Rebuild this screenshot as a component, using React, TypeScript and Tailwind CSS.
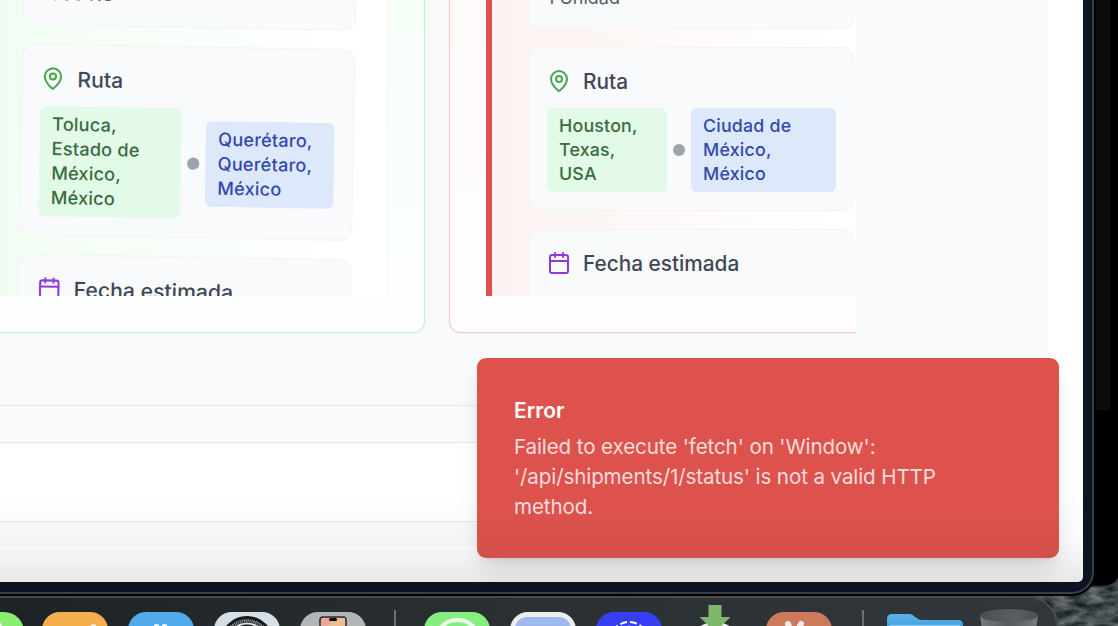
import { Calendar, MapPin } from "lucide-react";

type RouteProps = { from: string[]; to: string[]; fromWidth: string; toWidth: string };

function Field({ children, className = "" }: { children?: React.ReactNode; className?: string }) {
  return (
    <div className={"w-[327px] shrink-0 rounded-[12px] border border-[#f1f3f5] bg-[#f9fafc] " + className}>
      {children}
    </div>
  );
}

function Heading({ icon, label }: { icon: React.ReactNode; label: string }) {
  return (
    <div className="flex h-[30px] items-center gap-3">
      {icon}
      <span className="whitespace-nowrap pt-0.5 text-[20.800px] leading-[30px] font-medium text-[#3f4757]">{label}</span>
    </div>
  );
}

function Lines({ lines }: { lines: string[] }) {
  return (
    <>
      {lines.map((line, i) => (
        <div key={i} className="whitespace-nowrap">{line}</div>
      ))}
    </>
  );
}

function Route({ from, to, fromWidth, toWidth }: RouteProps) {
  return (
    <Field className="p-[18px]">
      <Heading icon={<MapPin size={24} strokeWidth={2} className="text-[#4aa553]" />} label="Ruta" />
      <div className="mt-3 flex items-center gap-1.5 text-[17.800px] leading-6 font-medium tracking-[0.2px]">
        <div className={"rounded-[6px] bg-[#e2fae7] px-3 py-1.5 text-[#3a6b40] " + fromWidth}>
          <Lines lines={from} />
        </div>
        <div className="size-3 shrink-0 rounded-full bg-[#9ea3ae]" />
        <div className={"rounded-[6px] bg-[#dee8fb] px-3 py-1.5 text-[#3348ae] " + toWidth}>
          <Lines lines={to} />
        </div>
      </div>
    </Field>
  );
}

function Stack({ route, amount, className }: { route: RouteProps; amount: string; className: string }) {
  return (
    <div className={"flex w-[327px] flex-col gap-[18px] " + className}>
      <Field className="flex h-[100px] items-end px-[18px] pb-[18.500px] text-[18px] leading-6 text-[#555c69]">
        <span>{amount}</span>
      </Field>
      <Route {...route} />
      <Field className="h-[164px] p-[18px]">
        <Heading icon={<Calendar size={24} strokeWidth={2} className="text-[#8a3ade]" />} label="Fecha estimada" />
      </Field>
    </div>
  );
}

function Dock() {
  return (
    <div className="absolute top-[596px] left-0 flex h-[60px] w-[1058px] overflow-hidden rounded-tr-[30px] border-t-2 border-r-2 border-[#454c4e] bg-linear-to-r from-[#1d2324] via-[#2b3133] to-[#30363a]">
      <svg width="1056" height="28" viewBox="0 598 1056 28" className="shrink-0">
        <defs>
          <linearGradient id="folder" x1="0" y1="0" x2="0" y2="1">
            <stop offset="0" stopColor="#5eb3e8" />
            <stop offset="1" stopColor="#3e99dd" />
          </linearGradient>
          <linearGradient id="bin" x1="0" y1="0" x2="1" y2="0">
            <stop offset="0" stopColor="#777b7e" />
            <stop offset=".5" stopColor="#55595c" />
            <stop offset="1" stopColor="#777b7e" />
          </linearGradient>
          <linearGradient id="binMouth" x1="0" y1="0" x2="1" y2="0">
            <stop offset="0" stopColor="#4a4f51" />
            <stop offset=".6" stopColor="#5a5e61" />
            <stop offset="1" stopColor="#4d5154" />
          </linearGradient>
        </defs>
        <rect x="-42" y="612" width="66" height="66" rx="20" fill="#8ced73" />
        <path d="M0 622v4h2z" fill="#fff" />
        <rect x="42" y="612" width="66" height="66" rx="18" fill="#f4b04c" />
        <path d="M90 626q3-3 6-1v1z" fill="#fff" />
        <rect x="128" y="612" width="66" height="66" rx="18" fill="#50aaeb" />
        <circle cx="156.500" cy="627" r="3" fill="#fff" />
        <circle cx="164.500" cy="627" r="3" fill="#fff" />
        <rect x="214" y="612" width="66" height="66" rx="18" fill="#d5dfe5" />
        <circle cx="247" cy="643" r="27" fill="#15191c" />
        <circle cx="247" cy="643" r="22.500" fill="none" stroke="#a2abb0" strokeWidth="3" strokeDasharray="1 1" />
        <circle cx="247" cy="643" r="20.500" fill="#d5dfe5" />
        <circle cx="247" cy="643" r="18.500" fill="#15191c" />
        <rect x="300" y="612" width="66" height="66" rx="18" fill="#b4b5b7" />
        <rect x="320" y="617" width="26" height="50" rx="3" fill="#e8a79a" stroke="#292b2c" strokeWidth="1.500" />
        <path d="M334 618h11v8h-17z" fill="#edbd92" />
        <rect x="329" y="618" width="8" height="3" rx="1.500" fill="#080909" />
        <path d="M395 610v16" stroke="#6a7072" strokeWidth="2" />
        <rect x="424" y="612" width="66" height="66" rx="18" fill="#86ee80" />
        <ellipse cx="457.500" cy="637" rx="20" ry="17" fill="none" stroke="#eafbe8" strokeWidth="4" />
        <rect x="510" y="612" width="66" height="66" rx="18" fill="#ededee" />
        <rect x="515" y="617" width="56" height="56" rx="12" fill="#9fb9ec" />
        <rect x="596" y="612" width="66" height="66" rx="18" fill="#3640f2" />
        <circle cx="629" cy="641" r="19" fill="none" stroke="#fff" strokeWidth="2" strokeDasharray="7 3" />
        <circle cx="629" cy="641" r="15" fill="none" stroke="#fff" strokeWidth="1" opacity=".8" />
        <ellipse cx="715" cy="632" rx="18" ry="10" fill="#eee" />
        <path d="M708.500 605h13v12h9l-15.500 15-15.500-15h9z" fill="#80b86b" />
        <rect x="766" y="612" width="66" height="66" rx="18" fill="#cd7a5c" />
        <path d="M788 624l4 10M801 624l-5 10" stroke="#f7e9e3" strokeWidth="6" strokeLinecap="round" />
        <path d="M863 610v16" stroke="#6a7072" strokeWidth="2" />
        <path d="M887 630v-11q0-5 5-5h17q3 0 5 2l4 3q2 1 5 1h35q5 0 5 5v5z" fill="url(#folder)" />
        <path d="M890 625.500h70" stroke="#7cc7f2" strokeWidth="1.500" />
        <path d="M980 615l2 15h54l2-15z" fill="url(#bin)" />
        <ellipse cx="1009" cy="615.500" rx="29" ry="6.500" fill="url(#binMouth)" />
      </svg>
    </div>
  );
}

function Wallpaper() {
  return (
    <svg className="absolute top-[560px] left-[1020px]" width="98" height="66" viewBox="0 0 98 66">
      <filter id="water" x="0" y="0" width="100%" height="100%" colorInterpolationFilters="sRGB">
        <feTurbulence type="fractalNoise" baseFrequency="0.06 0.14" numOctaves="4" seed="6" />
        <feColorMatrix values="0.6 0 0 0 -0.04  0.6 0 0 0 -0.01  0.6 0 0 0 0  0 0 0 0 1" />
      </filter>
      <rect width="98" height="66" filter="url(#water)" />
      <path d="M0 0h98v18q-5 8-15 8H60l-60 12z" fill="#000" />
      <path d="M70 26.500h13q11 0 15-8" fill="none" stroke="#303335" strokeWidth="1.500" />
    </svg>
  );
}

export default function App() {
  return (
    <main className="relative h-[626px] w-[1118px] overflow-hidden bg-black font-['Inter','Liberation_Sans',sans-serif]">
      <Wallpaper />
      <div className="absolute top-0 left-[1094px] h-[410px] w-4 bg-[#0c0c0c]" />
      <Dock />

      <div className="relative h-[594px] w-[1094px] rounded-br-[22px] border-r-2 border-b-2 border-[#3b3e48] bg-[#0d1322] shadow-[0_0_0_2px_#000]">
        <div className="relative h-[582px] w-[1083px] overflow-hidden rounded-br-[5px] bg-white">
          <div className="flex h-[545.500px] w-[1047px] flex-col bg-[#f9fafc]">
            <div className="flex h-[405px] w-[857px] shrink-0 gap-6 overflow-hidden">
              <section className="h-[333px] w-[425px] shrink-0 rounded-br-[12px] border-r border-b border-[#bdf5cd] bg-linear-to-b from-[#f6fef8] to-[#fdfffe] shadow-[0_1px_2px_rgba(0,0,0,0.04)]">
                <div className="h-[296px] w-[388px] overflow-hidden border-r border-[#f7faf8] bg-linear-to-r from-[#f1fdf3] to-white to-90%">
                  <Stack
                    className="mt-[-76.800px] ml-[23.700px] origin-top-left scale-[1.02] rotate-1"
                    amount="1500 KG"
                    route={{
                      from: ["Toluca,", "Estado de", "México,", "México"],
                      to: ["Querétaro,", "Querétaro,", "México"],
                      fromWidth: "w-[139px]",
                      toWidth: "w-[126px]",
                    }}
                  />
                </div>
              </section>
              <section className="h-[333px] w-[425px] shrink-0 rounded-bl-[12px] border-b border-l border-[#f8c9c9] bg-linear-to-b from-[#fffafa] to-[#fffdfe] pl-9 shadow-[0_1px_2px_rgba(0,0,0,0.04)]">
                <div className="h-[296px] w-[389px] overflow-hidden border-l-6 border-[#dc524d] bg-linear-to-r from-[#fcf2f1] to-white to-90%">
                  <Stack
                    className="-mt-[71px] ml-9"
                    amount="1 Unidad"
                    route={{
                      from: ["Houston,", "Texas,", "USA"],
                      to: ["Ciudad de", "México,", "México"],
                      fromWidth: "w-[120px]",
                      toWidth: "w-[145px]",
                    }}
                  />
                </div>
              </section>
            </div>
            <div className="h-[37px] shrink-0 border-t border-[#e5e7ea]" />
            <div className="h-20 shrink-0 border-y border-[#e5e7ea] bg-white" />
          </div>
          <div className="absolute bottom-0 left-0 h-[92px] w-full bg-linear-to-b from-transparent via-black/2 via-55% to-black/9" />
          <div
            role="alert"
            className="absolute top-[358px] left-[477px] h-[200px] w-[582px] rounded-[9px] bg-linear-to-b from-[#de524d] from-75% to-[#d44f49] px-[37px] pt-[38px] shadow-[0_15px_23px_-4px_rgba(0,0,0,0.12),0_6px_9px_-6px_rgba(0,0,0,0.12)]"
          >
            <div className="text-[21px] leading-[30px] font-semibold text-white">Error</div>
            <div className="mt-1.5 text-[20.600px] leading-[30px] tracking-[-0.120px] text-[#f9dddc]">
              <div>Failed to execute 'fetch' on 'Window':</div>
              <div>'/api/shipments/1/status' is not a valid HTTP</div>
              <div>method.</div>
            </div>
          </div>
        </div>
      </div>
    </main>
  );
}
